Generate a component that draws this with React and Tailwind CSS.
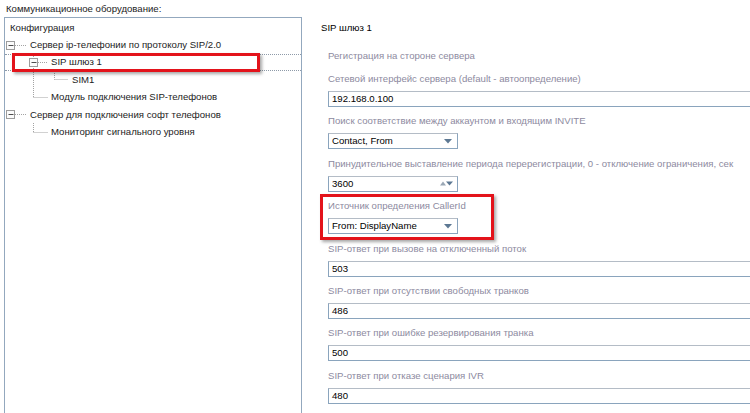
const fields = [
  { label: "Сетевой интерфейс сервера (default - автоопределение)", value: "192.168.0.100", kind: "text" },
  { label: "Поиск соответствие между аккаунтом и входящим INVITE", value: "Contact, From", kind: "select" },
  { label: "Принудительное выставление периода перерегистрации, 0 - отключение ограничения, сек", value: "3600", kind: "spin" },
  { label: "Источник определения CallerId", value: "From: DisplayName", kind: "select", marked: true },
  { label: "SIP-ответ при вызове на отключенный поток", value: "503", kind: "text" },
  { label: "SIP-ответ при отсутствии свободных транков", value: "486", kind: "text" },
  { label: "SIP-ответ при ошибке резервирования транка", value: "500", kind: "text" },
  { label: "SIP-ответ при отказе сценария IVR", value: "480", kind: "text" },
];

function TreeLines() {
  // connectors and expander boxes, coords relative to the tree content box
  const dot = { stroke: "#a3a3a3", strokeWidth: 1, strokeDasharray: "1 1" };
  const Expander = ({ cx, cy }) => (
    <g>
      <rect x={cx - 4} y={cy - 4} width="8" height="8" fill="#fbfbfb" stroke="#9c9c9c" />
      <line x1={cx - 2} y1={cy} x2={cx + 3} y2={cy} stroke="#4d4d4d" />
    </g>
  );
  return (
    <svg className="absolute left-0 top-0 pointer-events-none" width="300" height="140">
      <line x1="10" y1="27.5" x2="22" y2="27.5" {...dot} />
      <line x1="28.5" y1="36" x2="28.5" y2="79.5" {...dot} />
      <line x1="33" y1="44.5" x2="43" y2="44.5" {...dot} />
      <line x1="49.5" y1="53" x2="49.5" y2="61.5" {...dot} />
      <line x1="49.5" y1="61.5" x2="63" y2="61.5" {...dot} />
      <line x1="28.5" y1="79.5" x2="43" y2="79.5" {...dot} />
      <line x1="10" y1="96.5" x2="22" y2="96.5" {...dot} />
      <line x1="28.5" y1="105" x2="28.5" y2="114.5" {...dot} />
      <line x1="28.5" y1="114.5" x2="43" y2="114.5" {...dot} />
      <Expander cx={5.5} cy={27.5} />
      <Expander cx={28.5} cy={44.5} />
      <Expander cx={5.5} cy={96.5} />
    </svg>
  );
}

function TreeRow({ pad, h = "h-[17px]", children, selected }) {
  return (
    <div
      className={`relative ${h} flex items-center whitespace-nowrap text-[#1c1c1c] ${pad} ${
        selected ? "border-y border-dotted border-[#8e9aa8]" : ""
      }`}
    >
      {children}
      {selected && (
        <div className="absolute left-[7px] top-[-2px] w-[248px] h-[19px] border-[3px] border-[#e3131b] shadow-[2px_2px_3px_rgba(0,0,0,0.35)]" />
      )}
    </div>
  );
}

function Field({ f }) {
  const boxBase =
    "box-border h-[16px] mt-[5px] border border-[#8aa4bd] border-t-[#b4bcc6] bg-white flex items-center text-black leading-[14px]";
  return (
    <div className="relative mb-[7.4px]">
      <div className="h-[14px] leading-[14px] text-[#8d8aa0] whitespace-nowrap">{f.label}</div>
      {f.kind === "text" && (
        <div className={`${boxBase} w-[440px] pl-[3px]`}>{f.value}</div>
      )}
      {f.kind === "select" && (
        <div className={`${boxBase} w-[130px] pl-[3px] justify-between pr-[5px]`}>
          <span>{f.value}</span>
          <svg width="8" height="5" viewBox="0 0 8 5">
            <path d="M0 0 H8 L4 4.5 Z" fill="#5d7893" />
          </svg>
        </div>
      )}
      {f.kind === "spin" && (
        <div className={`${boxBase} w-[130px] pl-[3px] justify-between pr-[4px]`}>
          <span>{f.value}</span>
          <svg width="13" height="5" viewBox="0 0 13 5">
            <path d="M0 4.5 L3 0.5 L6 4.5 Z" fill="#9aa7b5" />
            <path d="M6 0.5 H13 L9.5 4.5 Z" fill="#5d7893" />
          </svg>
        </div>
      )}
      {f.marked && (
        <div className="absolute left-[-8px] top-[-5px] w-[174px] h-[46px] border-[3px] border-[#e3131b] shadow-[2px_2px_3px_rgba(0,0,0,0.35)]" />
      )}
    </div>
  );
}

export default function App() {
  return (
    <div className="w-[750px] h-[413px] overflow-hidden bg-white flex flex-col font-['Liberation_Sans',Arial,sans-serif] text-[9.6px]">
      <div className="h-[17px] pl-[6px] pt-[2px] leading-[13px] text-[#1c1c1c] whitespace-nowrap">
        Коммуникационное оборудование:
      </div>
      <div className="flex flex-1 min-h-0">
        <div className="ml-[4px] w-[298px] border-t border-x border-[#93a8be] relative pt-[2px]">
          <TreeLines />
          <TreeRow pad="pl-[5px]">Конфигурация</TreeRow>
          <TreeRow pad="pl-[25px]">Сервер ip-телефонии по протоколу SIP/2.0</TreeRow>
          <TreeRow pad="pl-[46px]" selected>SIP шлюз 1</TreeRow>
          <TreeRow pad="pl-[67px]" h="h-[18px]">SIM1</TreeRow>
          <TreeRow pad="pl-[46px]">Модуль подключения SIP-телефонов</TreeRow>
          <TreeRow pad="pl-[25px]" h="h-[18px]">Сервер для подключения софт телефонов</TreeRow>
          <TreeRow pad="pl-[46px]">Мониторинг сигнального уровня</TreeRow>
        </div>
        <div className="flex-1 min-w-0 overflow-hidden pt-[4px]">
          <div className="pl-[19px] h-[14px] leading-[14px] text-black">SIP шлюз 1</div>
          <div className="pl-[26px] mt-[14px]">
            <div className="h-[14px] leading-[14px] text-[#8d8aa0] mb-[9px]">Регистрация на стороне сервера</div>
            {fields.map((f) => (
              <Field key={f.label} f={f} />
            ))}
          </div>
        </div>
      </div>
    </div>
  );
}
